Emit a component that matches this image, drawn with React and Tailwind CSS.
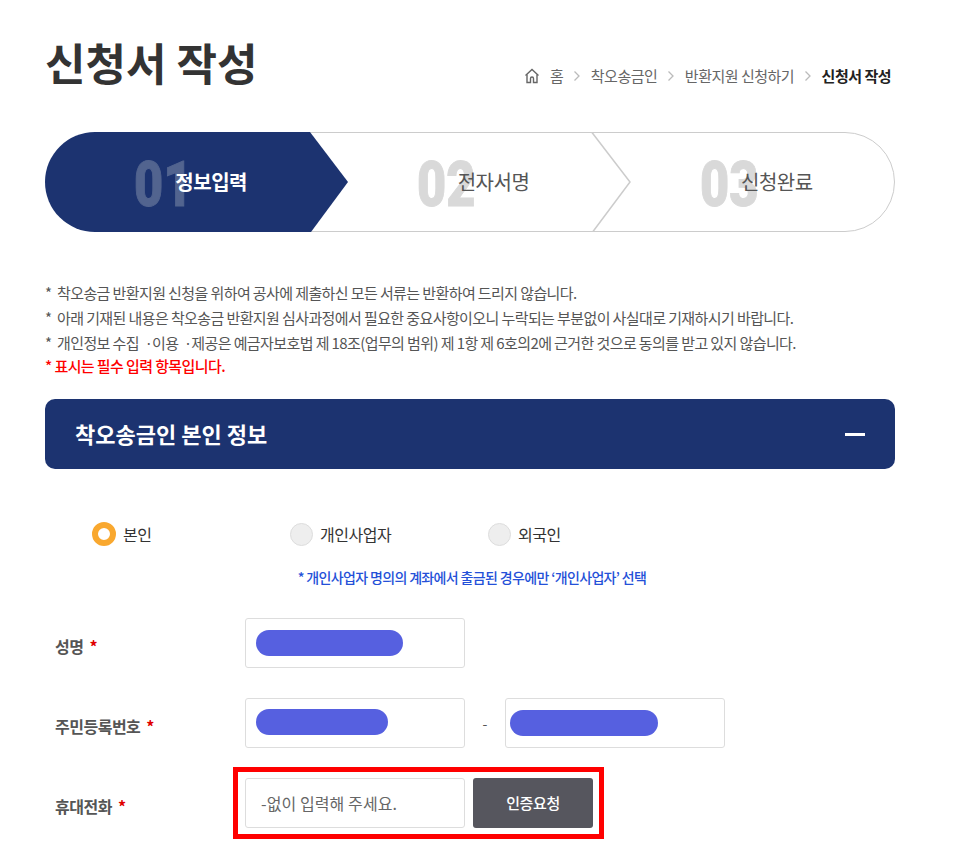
import React from "react";

const kr = "font-['Noto_Sans_CJK_KR','Noto_Sans',sans-serif]";

const crumbs = ["착오송금인", "반환지원 신청하기"];

const steps = [
  { no: "01", label: "정보입력", active: true },
  { no: "02", label: "전자서명" },
  { no: "03", label: "신청완료" },
];

const Dot = () => <span className="tracking-[-3.6px]">ㆍ</span>;

const notes = [
  "착오송금 반환지원 신청을 위하여 공사에 제출하신 모든 서류는 반환하여 드리지 않습니다.",
  "아래 기재된 내용은 착오송금 반환지원 심사과정에서 필요한 중요사항이오니 누락되는 부분없이 사실대로 기재하시기 바랍니다.",
  <>
    개인정보 수집 <Dot />이용 <Dot />제공은 예금자보호법 제 18조(업무의 범위) 제 1항 제 6호의2에 근거한 것으로 동의를 받고 있지 않습니다.
  </>,
];

const Chevron = () => (
  <svg width="8" height="12" viewBox="0 0 8 12" fill="none" className="mx-[9.75px]">
    <path d="M1.5 1.5 6 6l-4.500 4.500" stroke="#bbb" strokeWidth="1.300" />
  </svg>
);

const Radio = ({ checked, label, className }) => (
  <div className={`flex items-center gap-[7px] ${className}`}>
    {checked ? (
      <span className="w-[24px] h-[24px] rounded-full border-[6px] border-[#f9a82f] bg-white" />
    ) : (
      <span className="w-[23px] h-[23px] rounded-full border border-[#ddd] bg-[#eee]" />
    )}
    <span className="text-[16px] leading-[24px] tracking-[-0.5px] text-[#333]">{label}</span>
  </div>
);

const Blob = ({ className }) => (
  <span className={`block h-[26px] rounded-[13px] bg-[#5660e0] ${className}`} />
);

const Field = ({ label, children, className }) => (
  <div className={`flex items-center h-[50px] ${className}`}>
    <div className="w-[200px] pl-[10px] pt-[6px] text-[16px] font-bold tracking-[-0.5px] text-[#555] flex items-center">
      <span>{label}</span>
      <span className="text-[#e00000] ml-[6px]">*</span>
    </div>
    {children}
  </div>
);

const Input = ({ children, className = "" }) => (
  <div className={`w-[220px] h-[50px] border border-[#ddd] rounded-[3px] bg-white flex items-center ${className}`}>
    {children}
  </div>
);

export default function App() {
  return (
    <div className={`h-[845px] overflow-hidden bg-white ${kr}`}>
      <div className="ml-[45px] w-[850px]">
        {/* title + breadcrumb */}
        <div className="flex justify-between items-start h-[132px]">
          <h1 className="mt-[30px] text-[44px] leading-[64px] font-bold text-[#333]">신청서 작성</h1>
          <div className="mt-[65px] flex items-center h-[22px] text-[15px] tracking-[-0.5px] text-[#666] pr-[4px]">
            <svg width="16" height="16" viewBox="0 0 16 16" fill="none" stroke="#666" strokeWidth="1.400" className="mr-[10px]">
              <path d="M1.500 7.500 8 1.500l6.500 6" />
              <path d="M3 6.500V14.500h3.500V10.500a1.500 1.500 0 0 1 3 0V14.500H13V6.500" />
            </svg>
            <span>홈</span>
            <Chevron />
            {crumbs.map((c) => (
              <React.Fragment key={c}>
                <span>{c}</span>
                <Chevron />
              </React.Fragment>
            ))}
            <span className="font-bold text-[#222]">신청서 작성</span>
          </div>
        </div>

        {/* steps */}
        <div className="relative h-[100px] grid grid-cols-3">
          <svg width="850" height="100" viewBox="0 0 850 100" fill="none" className="absolute inset-0">
            <path d="M50 .5H800a49.500 49.500 0 0 1 0 99H50" stroke="#ccc" />
            <path d="M547 .5 585 50 548 99.500" stroke="#ccc" strokeWidth="1.500" />
            <path d="M50 0H265L303 50 266 100H50A50 50 0 0 1 50 0Z" fill="#1c3370" />
          </svg>
          {steps.map((s) => (
            <div key={s.no} className="relative flex items-center justify-center pl-[47px]">
              <div className={`relative ${s.active ? "ml-[2px]" : ""}`}>
                <span
                  className={`absolute top-[-17px] left-[-41px] origin-left scale-x-[0.8] [-webkit-text-stroke:1px_currentColor] font-['Roboto',sans-serif] font-black text-[63px] leading-[70px] ${
                    s.active ? "text-[#52648f]" : "text-[#d9d9d9]"
                  }`}
                >
                  {s.no}
                </span>
                <span
                  className={`relative text-[20px] leading-[30px] block tracking-[-0.5px] ${
                    s.active ? "font-bold text-white" : "text-[#555]"
                  }`}
                >
                  {s.label}
                </span>
              </div>
            </div>
          ))}
        </div>

        {/* notes */}
        <div className="mt-[48px] text-[15px] leading-[25px] tracking-[-0.6px] text-[#555]">
          {notes.map((n, i) => (
            <div key={i} className="flex">
              <span className="w-[12px]">*</span>
              <span>{n}</span>
            </div>
          ))}
          <div className="font-medium text-[#f00] leading-[21px]">* 표시는 필수 입력 항목입니다.</div>
        </div>

        {/* section header */}
        <div className="mt-[23px] h-[70px] rounded-[10px] bg-[#1c3370] flex items-center justify-between pl-[30px] pr-[30px]">
          <h2 className="-mt-[2px] text-[22px] font-bold text-white">착오송금인 본인 정보</h2>
          <span className="w-[20px] h-[3px] bg-white" />
        </div>

        {/* type radios */}
        <div className="mt-[53px] flex h-[24px]">
          <Radio checked label="본인" className="ml-[47px] w-[198px]" />
          <Radio label="개인사업자" className="w-[198px]" />
          <Radio label="외국인" />
        </div>
        <p className="mt-[21px] text-center pl-[4px] text-[14px] leading-[20px] font-medium tracking-[-0.65px] text-[#2450d8]">
          * 개인사업자 명의의 계좌에서 출금된 경우에만 ‘개인사업자’ 선택
        </p>

        {/* form */}
        <Field label="성명" className="mt-[31px]">
          <Input>
            <Blob className="ml-[10px] w-[147px]" />
          </Input>
        </Field>
        <Field label="주민등록번호" className="mt-[30px]">
          <Input>
            <Blob className="ml-[10px] mb-[2px] w-[132px]" />
          </Input>
          <span className="w-[40px] text-center text-[14px] text-[#555]">-</span>
          <Input>
            <Blob className="ml-[4px] w-[148px]" />
          </Input>
        </Field>
        <Field label="휴대전화" className="mt-[30px]">
          <div className="relative flex gap-[8px]">
            <Input className="pl-[15px] text-[16px] tracking-[0.1px] text-[#666]">-없이 입력해 주세요.</Input>
            <button className="w-[120px] h-[50px] rounded-[3px] bg-[#56565e] text-white text-[15px] font-medium tracking-[-0.4px]">
              인증요청
            </button>
            <div className="absolute left-[-12px] top-[-11px] w-[371px] h-[72px] border-[5px] border-[#f00]" />
          </div>
        </Field>
      </div>
    </div>
  );
}
